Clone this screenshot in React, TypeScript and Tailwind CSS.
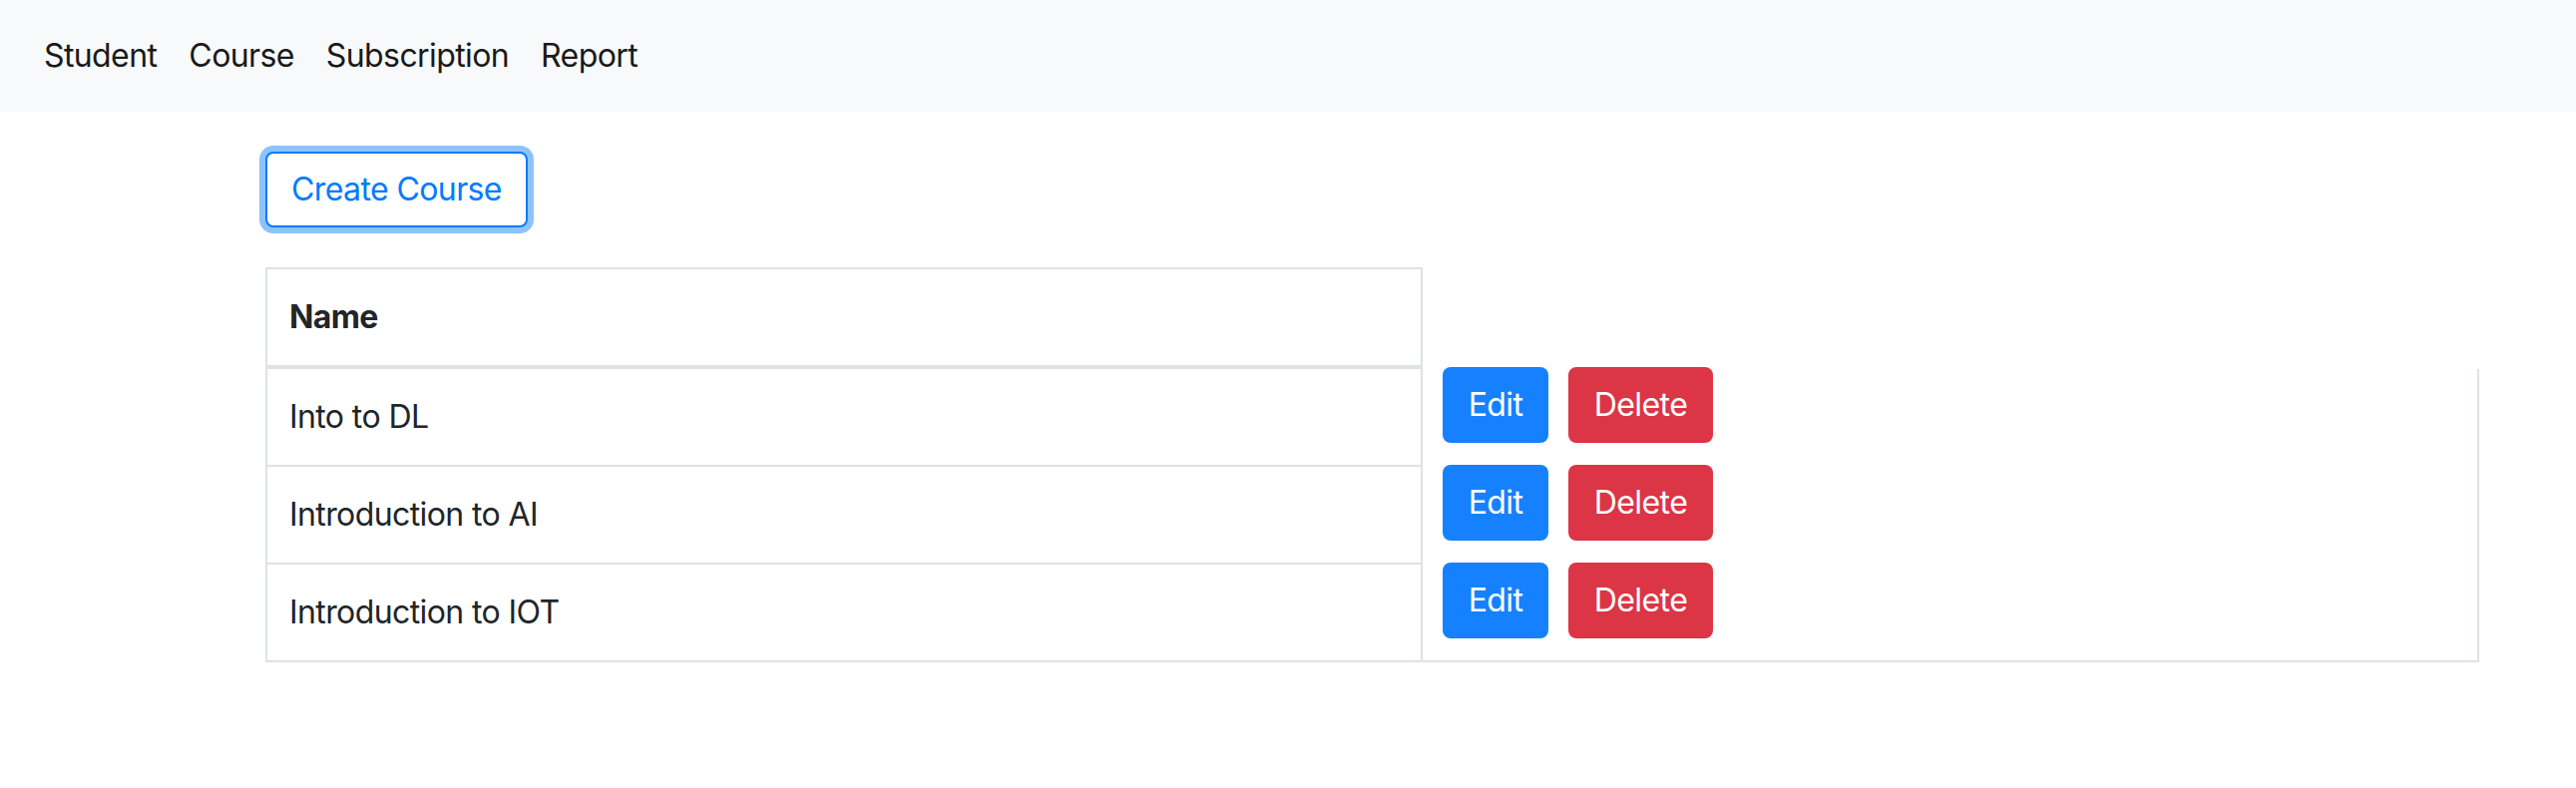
import React from "react";

const courses = ["Into to DL", "Introduction to AI", "Introduction to IOT"];

const navLinks = ["Student", "Course", "Subscription", "Report"];

export default function App() {
  return (
    <div className="min-h-screen bg-white font-['Inter','Liberation_Sans',sans-serif] tracking-[-0.6px] text-[#212529] text-[32px] leading-[48px]">
      {/* Navbar */}
      <nav className="h-[112px] bg-[#f8f9fa] flex items-center pl-[28px]">
        {navLinks.map((link) => (
          <a key={link} href="#" className="px-[16px] py-[16px] text-[#1a1a1a]">
            {link}
          </a>
        ))}
      </nav>

      <div className="pl-[266px] pt-[40px]">
        {/* Create button, focused outline style */}
        <button className="h-[76px] px-[24px] border-2 border-[#007bff] rounded-[8px] text-[#007bff] bg-white shadow-[0_0_0_6px_rgba(0,123,255,0.45)]">
          Create Course
        </button>

        {/* Courses table */}
        <div className="mt-[40px] w-[2219px]">
          <div className="flex">
            <div className="w-[1160px] h-[102px] border-t-2 border-l-2 border-r-2 border-b-4 border-[#dee2e6] px-[22px] py-[24px] font-bold">
              Name
            </div>
          </div>

          {courses.map((name, i) => {
            const last = i === courses.length - 1;
            return (
              <div key={name} className="flex">
                <div className="w-[1160px] h-[98px] border-l-2 border-r-2 border-b-2 border-[#dee2e6] px-[22px] py-[24px]">
                  {name}
                </div>
                <div
                  className={
                    last
                      ? "flex-1 border-r-2 border-b-2 border-[#dee2e6] pl-[20px]"
                      : "flex-1 border-r-2 border-[#dee2e6] pl-[20px]"
                  }
                >
                  <div className="-mt-[2px] flex gap-[20px]">
                    <button className="h-[76px] w-[106px] rounded-[8px] bg-[#1681ff] text-white">
                      Edit
                    </button>
                    <button className="h-[76px] w-[145px] rounded-[8px] bg-[#dc3545] text-white">
                      Delete
                    </button>
                  </div>
                </div>
              </div>
            );
          })}
        </div>
      </div>
    </div>
  );
}
